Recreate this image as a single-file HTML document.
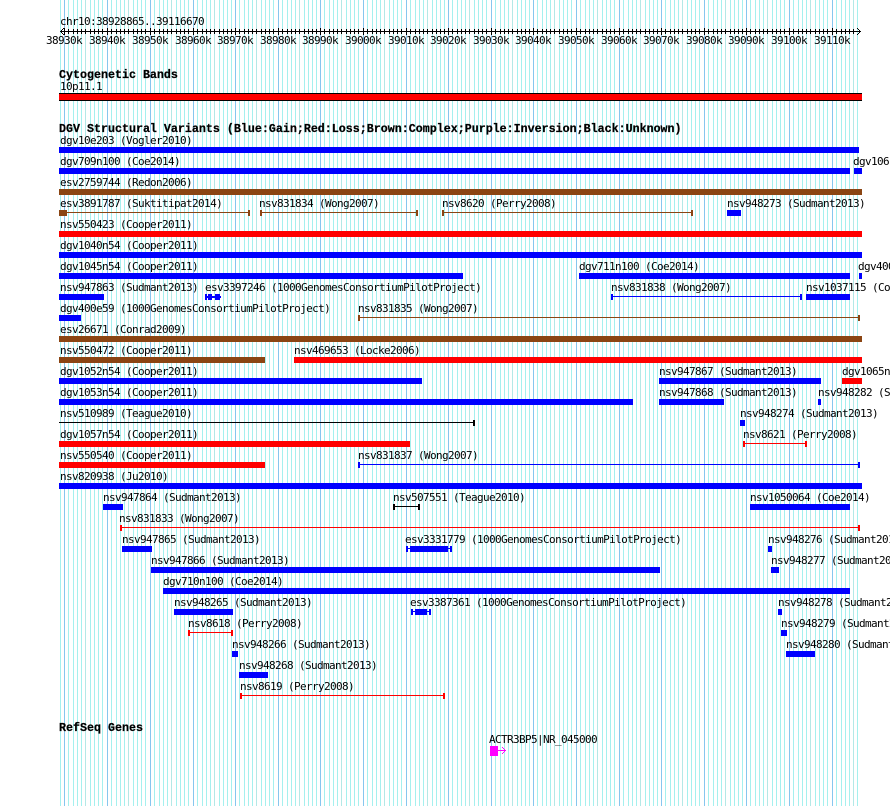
<!DOCTYPE html>
<html><head><meta charset="utf-8"><title>GBrowse</title>
<style>
html,body{margin:0;padding:0;background:#fff;width:890px;height:806px;overflow:hidden}
svg{display:block}
text{font-family:"DejaVu Sans Mono","Liberation Mono",monospace;font-size:11px;letter-spacing:-.62px;fill:#000;white-space:pre}
text.b{font-family:"Liberation Mono","DejaVu Sans Mono",monospace;font-size:11.67px;letter-spacing:0;font-weight:bold;stroke:#000;stroke-width:.25px}
</style></head><body>
<svg xmlns="http://www.w3.org/2000/svg" width="890" height="806" viewBox="0 0 890 806">
<defs>
<g id="m" shape-rendering="crispEdges">
<rect x="0" y="0" width="1" height="806" fill="#87c6ee"/>
<rect x="4" y="0" width="1" height="806" fill="#a5f0ee"/>
<rect x="9" y="0" width="1" height="806" fill="#a5f0ee"/>
<rect x="13" y="0" width="1" height="806" fill="#a5f0ee"/>
<rect x="17" y="0" width="1" height="806" fill="#a5f0ee"/>
<rect x="21" y="0" width="1" height="806" fill="#b4e8e6"/>
<rect x="26" y="0" width="1" height="806" fill="#a5f0ee"/>
<rect x="30" y="0" width="1" height="806" fill="#a5f0ee"/>
<rect x="34" y="0" width="1" height="806" fill="#a5f0ee"/>
<rect x="38" y="0" width="1" height="806" fill="#a5f0ee"/>
</g>
<g id="t" shape-rendering="crispEdges" fill="#000">
<rect x="0" y="28" width="1" height="7"/>
<rect x="4" y="29" width="1" height="5"/>
<rect x="9" y="29" width="1" height="5"/>
<rect x="13" y="29" width="1" height="5"/>
<rect x="17" y="29" width="1" height="5"/>
<rect x="21" y="29" width="1" height="5"/>
<rect x="26" y="29" width="1" height="5"/>
<rect x="30" y="29" width="1" height="5"/>
<rect x="34" y="29" width="1" height="5"/>
<rect x="38" y="29" width="1" height="5"/>
</g>
</defs>
<rect width="890" height="806" fill="#fff"/>
<!-- grid -->
<rect x="60" y="0" width="1" height="806" fill="#a5f0ee" shape-rendering="crispEdges"/>
<use href="#m" x="64"/><use href="#m" x="107"/><use href="#m" x="150"/><use href="#m" x="193"/><use href="#m" x="235"/><use href="#m" x="278"/><use href="#m" x="320"/><use href="#m" x="363"/><use href="#m" x="406"/><use href="#m" x="448"/><use href="#m" x="491"/><use href="#m" x="533"/><use href="#m" x="576"/><use href="#m" x="619"/><use href="#m" x="661"/><use href="#m" x="704"/><use href="#m" x="746"/><use href="#m" x="789"/>
<g shape-rendering="crispEdges">
<rect x="832" y="0" width="1" height="806" fill="#87c6ee"/>
<rect x="836" y="0" width="1" height="806" fill="#a5f0ee"/>
<rect x="841" y="0" width="1" height="806" fill="#a5f0ee"/>
<rect x="845" y="0" width="1" height="806" fill="#a5f0ee"/>
<rect x="849" y="0" width="1" height="806" fill="#a5f0ee"/>
<rect x="853" y="0" width="1" height="806" fill="#b4e8e6"/>
<rect x="857" y="0" width="1" height="806" fill="#a5f0ee"/>
</g>
<!-- ruler -->
<text x="60" y="25">chr10:38928865..39116670</text>
<g shape-rendering="crispEdges" fill="#000">
<rect x="60" y="31" width="801" height="1"/>
<rect x="61" y="30" width="1" height="1"/><rect x="61" y="32" width="1" height="1"/>
<rect x="62" y="29" width="1" height="1"/><rect x="62" y="33" width="1" height="1"/>
<rect x="63" y="28" width="1" height="1"/><rect x="63" y="34" width="1" height="1"/>
<rect x="859" y="30" width="1" height="1"/><rect x="859" y="32" width="1" height="1"/>
<rect x="858" y="29" width="1" height="1"/><rect x="858" y="33" width="1" height="1"/>
<rect x="857" y="28" width="1" height="1"/><rect x="857" y="34" width="1" height="1"/>
<rect x="832" y="28" width="1" height="7"/>
<rect x="836" y="29" width="1" height="5"/><rect x="841" y="29" width="1" height="5"/><rect x="845" y="29" width="1" height="5"/><rect x="849" y="29" width="1" height="5"/><rect x="853" y="29" width="1" height="5"/>
</g>
<use href="#t" x="64"/><use href="#t" x="107"/><use href="#t" x="150"/><use href="#t" x="193"/><use href="#t" x="235"/><use href="#t" x="278"/><use href="#t" x="320"/><use href="#t" x="363"/><use href="#t" x="406"/><use href="#t" x="448"/><use href="#t" x="491"/><use href="#t" x="533"/><use href="#t" x="576"/><use href="#t" x="619"/><use href="#t" x="661"/><use href="#t" x="704"/><use href="#t" x="746"/><use href="#t" x="789"/>
<text x="46" y="44">38930k</text><text x="89" y="44">38940k</text><text x="132" y="44">38950k</text><text x="175" y="44">38960k</text><text x="217" y="44">38970k</text><text x="260" y="44">38980k</text><text x="302" y="44">38990k</text><text x="345" y="44">39000k</text><text x="388" y="44">39010k</text><text x="430" y="44">39020k</text><text x="473" y="44">39030k</text><text x="515" y="44">39040k</text><text x="558" y="44">39050k</text><text x="601" y="44">39060k</text><text x="643" y="44">39070k</text><text x="686" y="44">39080k</text><text x="728" y="44">39090k</text><text x="771" y="44">39100k</text><text x="814" y="44">39110k</text>
<!-- cytoband -->
<text class="b" x="59" y="78">Cytogenetic Bands</text>
<text x="60" y="90">10p11.1</text>
<rect x="59" y="93" width="803" height="8" fill="#000" shape-rendering="crispEdges"/>
<rect x="59" y="94" width="803" height="6" fill="#f00" shape-rendering="crispEdges"/>
<!-- DGV -->
<text class="b" x="59" y="132">DGV Structural Variants (Blue:Gain;Red:Loss;Brown:Complex;Purple:Inversion;Black:Unknown)</text>
<g shape-rendering="crispEdges">
<g fill="#00f">
<rect x="59" y="147" width="800" height="6"/>
<rect x="59" y="168" width="791" height="6"/><rect x="854" y="168" width="8" height="6"/>
<rect x="727" y="210" width="14" height="6"/>
<rect x="59" y="252" width="803" height="6"/>
<rect x="59" y="273" width="404" height="6"/><rect x="579" y="273" width="271" height="6"/><rect x="859" y="273" width="3" height="6"/>
<rect x="59" y="294" width="45" height="6"/><rect x="806" y="294" width="44" height="6"/>
<rect x="205" y="296" width="16" height="2"/><rect x="205" y="294" width="2" height="6"/><rect x="208" y="294" width="4" height="6"/><rect x="215" y="294" width="5" height="6"/>
<rect x="611" y="296" width="191" height="1"/><rect x="611" y="294" width="2" height="6"/><rect x="800" y="294" width="2" height="6"/>
<rect x="59" y="315" width="22" height="6"/>
<rect x="59" y="378" width="363" height="6"/><rect x="659" y="378" width="162" height="6"/>
<rect x="59" y="399" width="574" height="6"/><rect x="659" y="399" width="65" height="6"/><rect x="818" y="399" width="3" height="6"/>
<rect x="740" y="420" width="5" height="6"/>
<rect x="358" y="464" width="502" height="1"/><rect x="358" y="462" width="2" height="6"/><rect x="858" y="462" width="2" height="6"/>
<rect x="59" y="483" width="803" height="6"/>
<rect x="103" y="504" width="20" height="6"/><rect x="750" y="504" width="100" height="6"/>
<rect x="122" y="546" width="30" height="6"/><rect x="768" y="546" width="4" height="6"/>
<rect x="406" y="548" width="46" height="1"/><rect x="406" y="546" width="2" height="6"/><rect x="450" y="546" width="2" height="6"/><rect x="410" y="546" width="38" height="6"/>
<rect x="151" y="567" width="509" height="6"/><rect x="771" y="567" width="8" height="6"/>
<rect x="163" y="588" width="687" height="6"/>
<rect x="174" y="609" width="59" height="6"/><rect x="778" y="609" width="4" height="6"/>
<rect x="411" y="611" width="20" height="1"/><rect x="411" y="609" width="2" height="6"/><rect x="429" y="609" width="2" height="6"/><rect x="415" y="609" width="12" height="6"/>
<rect x="781" y="630" width="6" height="6"/>
<rect x="232" y="651" width="6" height="6"/><rect x="786" y="651" width="29" height="6"/>
<rect x="239" y="672" width="29" height="6"/>
</g>
<g fill="#f00">
<rect x="59" y="231" width="803" height="6"/>
<rect x="294" y="357" width="568" height="6"/>
<rect x="842" y="378" width="20" height="6"/>
<rect x="59" y="441" width="351" height="6"/>
<rect x="743" y="443" width="64" height="1"/><rect x="743" y="441" width="2" height="6"/><rect x="805" y="441" width="2" height="6"/>
<rect x="59" y="462" width="206" height="6"/>
<rect x="120" y="527" width="740" height="1"/><rect x="120" y="525" width="2" height="6"/><rect x="858" y="525" width="2" height="6"/>
<rect x="188" y="632" width="45" height="1"/><rect x="188" y="630" width="2" height="6"/><rect x="231" y="630" width="2" height="6"/>
<rect x="240" y="695" width="205" height="1"/><rect x="240" y="693" width="2" height="6"/><rect x="443" y="693" width="2" height="6"/>
</g>
<g fill="#8b4513">
<rect x="59" y="189" width="803" height="6"/>
<rect x="59" y="210" width="8" height="6"/><rect x="67" y="212" width="183" height="1"/><rect x="248" y="210" width="2" height="6"/>
<rect x="260" y="212" width="158" height="1"/><rect x="260" y="210" width="2" height="6"/><rect x="416" y="210" width="2" height="6"/>
<rect x="442" y="212" width="251" height="1"/><rect x="442" y="210" width="2" height="6"/><rect x="691" y="210" width="2" height="6"/>
<rect x="358" y="317" width="502" height="1"/><rect x="358" y="315" width="2" height="6"/><rect x="858" y="315" width="2" height="6"/>
<rect x="59" y="336" width="803" height="6"/>
<rect x="59" y="357" width="206" height="6"/>
</g>
<g fill="#000">
<rect x="59" y="422" width="416" height="1"/><rect x="473" y="420" width="2" height="6"/>
<rect x="393" y="506" width="27" height="1"/><rect x="393" y="504" width="2" height="6"/><rect x="418" y="504" width="2" height="6"/>
</g>
</g>
<text x="60" y="144">dgv10e203 (Vogler2010)</text>
<text x="60" y="165">dgv709n100 (Coe2014)</text><text x="853" y="165">dgv106</text>
<text x="60" y="186">esv2759744 (Redon2006)</text>
<text x="60" y="207">esv3891787 (Suktitipat2014)</text><text x="259" y="207">nsv831834 (Wong2007)</text><text x="442" y="207">nsv8620 (Perry2008)</text><text x="727" y="207">nsv948273 (Sudmant2013)</text>
<text x="60" y="228">nsv550423 (Cooper2011)</text>
<text x="60" y="249">dgv1040n54 (Cooper2011)</text>
<text x="60" y="270">dgv1045n54 (Cooper2011)</text><text x="579" y="270">dgv711n100 (Coe2014)</text><text x="858" y="270">dgv400</text>
<text x="60" y="291">nsv947863 (Sudmant2013)</text><text x="205" y="291">esv3397246 (1000GenomesConsortiumPilotProject)</text><text x="611" y="291">nsv831838 (Wong2007)</text><text x="806" y="291">nsv1037115 (Coe2014)</text>
<text x="60" y="312">dgv400e59 (1000GenomesConsortiumPilotProject)</text><text x="358" y="312">nsv831835 (Wong2007)</text>
<text x="60" y="333">esv26671 (Conrad2009)</text>
<text x="60" y="354">nsv550472 (Cooper2011)</text><text x="294" y="354">nsv469653 (Locke2006)</text>
<text x="60" y="375">dgv1052n54 (Cooper2011)</text><text x="659" y="375">nsv947867 (Sudmant2013)</text><text x="842" y="375">dgv1065n54</text>
<text x="60" y="396">dgv1053n54 (Cooper2011)</text><text x="659" y="396">nsv947868 (Sudmant2013)</text><text x="818" y="396">nsv948282 (Sudmant2013)</text>
<text x="60" y="417">nsv510989 (Teague2010)</text><text x="740" y="417">nsv948274 (Sudmant2013)</text>
<text x="60" y="438">dgv1057n54 (Cooper2011)</text><text x="743" y="438">nsv8621 (Perry2008)</text>
<text x="60" y="459">nsv550540 (Cooper2011)</text><text x="358" y="459">nsv831837 (Wong2007)</text>
<text x="60" y="480">nsv820938 (Ju2010)</text>
<text x="103" y="501">nsv947864 (Sudmant2013)</text><text x="393" y="501">nsv507551 (Teague2010)</text><text x="750" y="501">nsv1050064 (Coe2014)</text>
<text x="119" y="522">nsv831833 (Wong2007)</text>
<text x="122" y="543">nsv947865 (Sudmant2013)</text><text x="405" y="543">esv3331779 (1000GenomesConsortiumPilotProject)</text><text x="768" y="543">nsv948276 (Sudmant2013)</text>
<text x="151" y="564">nsv947866 (Sudmant2013)</text><text x="771" y="564">nsv948277 (Sudmant2013)</text>
<text x="163" y="585">dgv710n100 (Coe2014)</text>
<text x="174" y="606">nsv948265 (Sudmant2013)</text><text x="410" y="606">esv3387361 (1000GenomesConsortiumPilotProject)</text><text x="778" y="606">nsv948278 (Sudmant2013)</text>
<text x="188" y="627">nsv8618 (Perry2008)</text><text x="781" y="627">nsv948279 (Sudmant2013)</text>
<text x="232" y="648">nsv948266 (Sudmant2013)</text><text x="786" y="648">nsv948280 (Sudmant2013)</text>
<text x="239" y="669">nsv948268 (Sudmant2013)</text>
<text x="240" y="690">nsv8619 (Perry2008)</text>
<!-- RefSeq -->
<text class="b" x="59" y="731">RefSeq Genes</text>
<text x="489" y="743">ACTR3BP5|NR_045000</text>
<g shape-rendering="crispEdges" fill="#f0f">
<rect x="490" y="746" width="8" height="10"/>
<rect x="498" y="750" width="8" height="1"/>
<rect x="505" y="750" width="1" height="1"/><rect x="504" y="749" width="1" height="3"/><rect x="503" y="748" width="1" height="1"/><rect x="503" y="752" width="1" height="1"/><rect x="502" y="747" width="1" height="1"/><rect x="502" y="753" width="1" height="1"/>
</g>
</svg>
</body></html>
